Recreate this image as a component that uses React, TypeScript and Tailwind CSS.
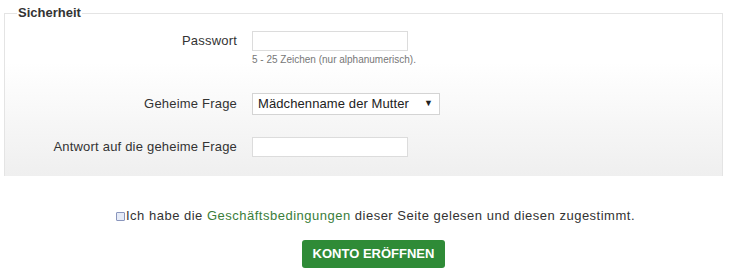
export default function App() {
  return (
    <div className="w-[747px] h-[274px] bg-white font-['Liberation_Sans',Arial,sans-serif] text-[#333]">
      <div className="pl-[4px] pr-[24px] pt-[5px]">
        {/* Sicherheit */}
        <fieldset className="border border-b-0 border-[#e4e4e4] bg-gradient-to-b from-white from-30% to-[#efefef] pb-[19px]">
          <legend className="ml-[12px] px-[1px] text-[13px] font-bold text-[#333] leading-[16px]">
            Sicherheit
          </legend>

          {/* Passwort */}
          <div className="flex mt-[10px]">
            <label className="w-[232px] text-right text-[13px] tracking-[0.2px] leading-[20px]">
              Passwort
            </label>
            <div className="ml-[15px]">
              <input
                type="password"
                className="block w-[156px] h-[20px] border border-[#dcdcdc] bg-white outline-none"
              />
              <p className="mt-[3px] text-[10px] leading-[12px] text-[#777]">
                5 - 25 Zeichen (nur alphanumerisch).
              </p>
            </div>
          </div>

          {/* Geheime Frage */}
          <div className="flex items-center mt-[27px]">
            <label className="w-[232px] text-right text-[13px] tracking-[0.2px] leading-[20px]">
              Geheime Frage
            </label>
            <div className="ml-[15px] w-[188px] h-[22px] border border-[#d4d4d4] bg-white flex items-center justify-between pl-[5px] pr-[6px] text-[13px] tracking-[0.1px] text-[#222]">
              <span>Mädchenname der Mutter</span>
              <span className="text-[9px]">▼</span>
            </div>
          </div>

          {/* Antwort */}
          <div className="flex items-center mt-[22px]">
            <label className="w-[232px] text-right text-[13px] tracking-[0.2px] leading-[20px]">
              Antwort auf die geheime Frage
            </label>
            <input
              type="text"
              className="ml-[15px] block w-[156px] h-[20px] border border-[#dcdcdc] bg-white outline-none"
            />
          </div>
        </fieldset>
      </div>

      {/* AGB */}
      <div className="mt-[32px] flex justify-center">
        <label className="flex items-center text-[13px] tracking-[0.5px] leading-[16px] text-[#333] pl-[4px]">
          <span className="w-[9px] h-[9px] border border-[#8a96bd] bg-[#e6ebf7] rounded-[1px] mr-[1px]" />
          Ich habe die&nbsp;
          <span className="text-[#3a7d3a]">Geschäftsbedingungen</span>
          &nbsp;dieser Seite gelesen und diesen zugestimmt.
        </label>
      </div>

      <div className="mt-[16px] flex justify-center">
        <button className="w-[143px] h-[28px] rounded-[3px] bg-[#2f8b37] text-white text-[13px] font-bold">
          KONTO ERÖFFNEN
        </button>
      </div>
    </div>
  );
}
